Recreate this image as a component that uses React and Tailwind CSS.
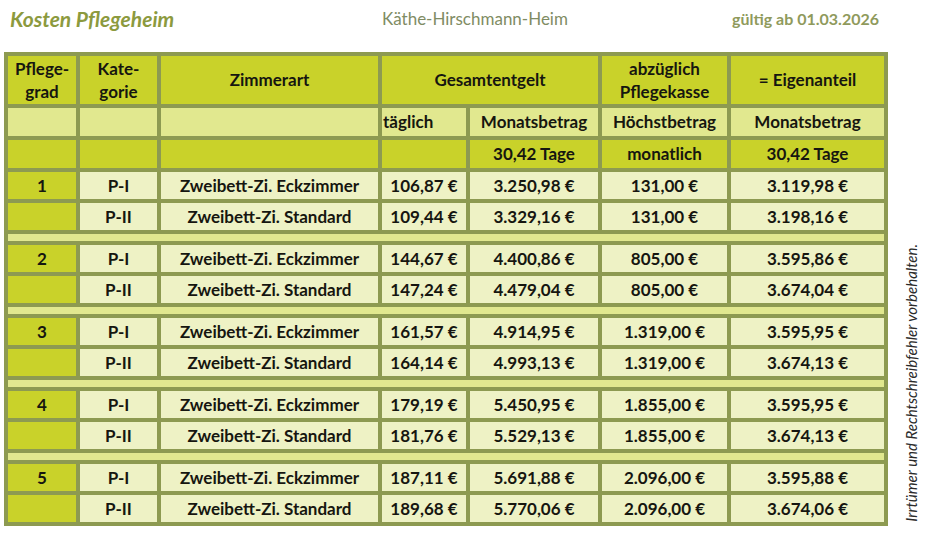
import React from "react";

const strong = "bg-[#c9d22a]";
const mid = "bg-[#e1e88f]";
const pale = "bg-[#eef2c5]";

const groups = [
  {
    grad: "1",
    rows: [
      ["P-I", "Zweibett-Zi. Eckzimmer", "106,87 €", "3.250,98 €", "131,00 €", "3.119,98 €"],
      ["P-II", "Zweibett-Zi. Standard", "109,44 €", "3.329,16 €", "131,00 €", "3.198,16 €"],
    ],
  },
  {
    grad: "2",
    rows: [
      ["P-I", "Zweibett-Zi. Eckzimmer", "144,67 €", "4.400,86 €", "805,00 €", "3.595,86 €"],
      ["P-II", "Zweibett-Zi. Standard", "147,24 €", "4.479,04 €", "805,00 €", "3.674,04 €"],
    ],
  },
  {
    grad: "3",
    rows: [
      ["P-I", "Zweibett-Zi. Eckzimmer", "161,57 €", "4.914,95 €", "1.319,00 €", "3.595,95 €"],
      ["P-II", "Zweibett-Zi. Standard", "164,14 €", "4.993,13 €", "1.319,00 €", "3.674,13 €"],
    ],
  },
  {
    grad: "4",
    rows: [
      ["P-I", "Zweibett-Zi. Eckzimmer", "179,19 €", "5.450,95 €", "1.855,00 €", "3.595,95 €"],
      ["P-II", "Zweibett-Zi. Standard", "181,76 €", "5.529,13 €", "1.855,00 €", "3.674,13 €"],
    ],
  },
  {
    grad: "5",
    rows: [
      ["P-I", "Zweibett-Zi. Eckzimmer", "187,11 €", "5.691,88 €", "2.096,00 €", "3.595,88 €"],
      ["P-II", "Zweibett-Zi. Standard", "189,68 €", "5.770,06 €", "2.096,00 €", "3.674,06 €"],
    ],
  },
];

const Cell = ({ className = "", children }) => (
  <div className={`flex items-center justify-center text-center ${className}`}>
    {children}
  </div>
);

const App = () => {
  return (
    <div
      className="w-[930px] h-[534px] bg-white text-[#161610] overflow-hidden"
      style={{ fontFamily: "Lato, 'Open Sans', sans-serif" }}
    >
      {/* header line */}
      <div className="flex items-center h-[36px] pt-[1px]">
        <div className="w-[382px] pl-[10px] text-[21px] font-bold italic text-[#8c9a3e]">
          Kosten Pflegeheim
        </div>
        <div className="w-[350px] text-[17px] text-[#7f8c64]">Käthe-Hirschmann-Heim</div>
        <div className="text-[16px] font-bold text-[#8f9a5c]">gültig ab 01.03.2026</div>
      </div>

      <div className="flex mt-[16px]">
        <div className="ml-[4px] bg-[#8d9a51] p-[4px]">
          <div className="grid grid-cols-[68px_77px_217px_84px_128px_125px_153px] gap-[4px] text-[17px] font-bold">
            {/* header row 1 */}
            <Cell className={`${strong} h-[48px] leading-[23px]`}>
              Pflege-
              <br />
              grad
            </Cell>
            <Cell className={`${strong} h-[48px] leading-[23px]`}>
              Kate-
              <br />
              gorie
            </Cell>
            <Cell className={`${strong} h-[48px]`}>Zimmerart</Cell>
            <Cell className={`${strong} h-[48px] col-span-2`}>Gesamtentgelt</Cell>
            <Cell className={`${strong} h-[48px] leading-[23px]`}>
              abzüglich
              <br />
              Pflegekasse
            </Cell>
            <Cell className={`${strong} h-[48px]`}>= Eigenanteil</Cell>

            {/* header row 2 */}
            <Cell className={`${mid} h-[28px]`} />
            <Cell className={`${mid} h-[28px]`} />
            <Cell className={`${mid} h-[28px]`} />
            <div className={`${mid} h-[28px] flex items-center pl-[1px]`}>täglich</div>
            <Cell className={`${mid} h-[28px]`}>Monatsbetrag</Cell>
            <Cell className={`${mid} h-[28px]`}>Höchstbetrag</Cell>
            <Cell className={`${mid} h-[28px]`}>Monatsbetrag</Cell>

            {/* header row 3 */}
            <Cell className={`${strong} h-[28px]`} />
            <Cell className={`${strong} h-[28px]`} />
            <Cell className={`${strong} h-[28px]`} />
            <Cell className={`${strong} h-[28px]`} />
            <Cell className={`${strong} h-[28px]`}>30,42 Tage</Cell>
            <Cell className={`${strong} h-[28px]`}>monatlich</Cell>
            <Cell className={`${strong} h-[28px]`}>30,42 Tage</Cell>

            {groups.map((g, gi) => (
              <React.Fragment key={g.grad}>
                {g.rows.map((r, ri) => (
                  <React.Fragment key={ri}>
                    <Cell className={`${strong} h-[27px]`}>{ri === 0 ? g.grad : ""}</Cell>
                    {r.map((v, vi) => (
                      <Cell key={vi} className={`${pale} h-[27px]`}>
                        {v}
                      </Cell>
                    ))}
                  </React.Fragment>
                ))}
                {gi < groups.length - 1 && <div className={`${mid} col-span-7 h-[7px]`} />}
              </React.Fragment>
            ))}
          </div>
        </div>

        <div className="flex-1 flex items-end justify-center pb-[4px]">
          <div className="[writing-mode:vertical-rl] rotate-180 italic text-[15px] text-[#2a2a2a] ml-[4px]">
            Irrtümer und Rechtschreibfehler vorbehalten.
          </div>
        </div>
      </div>
    </div>
  );
};

export default App;
